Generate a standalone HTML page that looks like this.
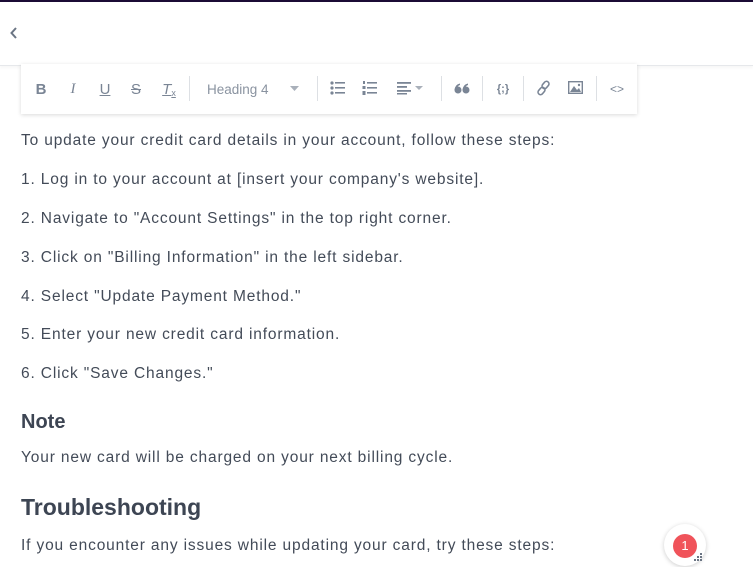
<!DOCTYPE html>
<html><head><meta charset="utf-8"><style>
*{margin:0;padding:0;box-sizing:border-box}
body{width:753px;height:567px;overflow:hidden;background:#fff;font-family:"Liberation Sans",sans-serif;color:#3d4553;position:relative}
.top{position:absolute;left:0;top:0;width:753px;height:2px;background:#1b0b35}
.hdr{position:absolute;left:0;top:2px;width:753px;height:64px;background:#fff;border-bottom:1px solid #e6e8eb;box-shadow:0 2px 3px rgba(0,0,0,.04)}
.back{position:absolute;left:9px;top:26px}
.tb{position:absolute;left:21px;top:64px;width:616px;height:50px;background:#fff;box-shadow:0 1px 4px rgba(0,0,0,.15);}
.tb .i{position:absolute;top:0;height:50px;display:flex;align-items:center;justify-content:center;color:#7a8595;font-size:15px}
.sep{position:absolute;top:12px;width:1px;height:25px;background:#dde0e4}
p,h4,h2{position:absolute;left:21px;white-space:nowrap}
p{font-size:15.5px;letter-spacing:.85px;color:#434b58}
</style></head><body>
<div class="top"></div>
<div class="hdr"></div>
<svg class="back" width="10" height="14" viewBox="0 0 10 14"><path d="M7 2 L2.5 7 L7 12" fill="none" stroke="#6b7584" stroke-width="2"/></svg>
<div class="tb">
 <div class="i" style="left:12px;width:16px;font-weight:bold">B</div>
 <div class="i" style="left:44px;width:16px;font-style:italic;font-family:'Liberation Serif',serif">I</div>
 <div class="i" style="left:76px;width:16px;text-decoration:underline">U</div>
 <div class="i" style="left:107px;width:16px;text-decoration:line-through">S</div>
 <div class="i" style="left:140px;width:16px;font-style:italic;text-decoration:underline">T<span style="font-size:9px;font-style:normal;text-decoration:none;margin-top:8px">x</span></div>
 <div class="sep" style="left:168px"></div>
 <div class="i" style="left:186px;font-size:13.5px;color:#8a93a0">Heading 4</div>
 <svg style="position:absolute;left:269px;top:22px" width="9" height="5"><path d="M0 0H9L4.5 5Z" fill="#a9b0ba"/></svg>
 <div class="sep" style="left:296px"></div>
 <svg style="position:absolute;left:309px;top:16px" width="16" height="16" viewBox="0 0 16 16" fill="#7a8595"><circle cx="2" cy="3" r="1.6"/><circle cx="2" cy="8" r="1.6"/><circle cx="2" cy="13" r="1.6"/><rect x="5" y="2" width="10" height="1.6"/><rect x="5" y="7" width="10" height="1.6"/><rect x="5" y="12" width="10" height="1.6"/></svg>
 <svg style="position:absolute;left:341px;top:16px" width="16" height="16" viewBox="0 0 16 16" fill="#7a8595"><rect x="1" y="1" width="2" height="3"/><rect x="0.5" y="6" width="3" height="3"/><rect x="0.5" y="11" width="3" height="4"/><rect x="5" y="2" width="10" height="1.6"/><rect x="5" y="7" width="10" height="1.6"/><rect x="5" y="12" width="10" height="1.6"/></svg>
 <svg style="position:absolute;left:376px;top:17px" width="16" height="14" viewBox="0 0 16 14" fill="#7a8595"><rect y="1" width="14" height="1.8"/><rect y="5" width="10" height="1.8"/><rect y="9" width="14" height="1.8"/><rect y="12" width="10" height="1.5"/></svg>
 <svg style="position:absolute;left:394px;top:22px" width="8" height="4"><path d="M0 0H8L4 4Z" fill="#a9b0ba"/></svg>
 <div class="sep" style="left:420px"></div>
 <svg style="position:absolute;left:433px;top:19px" width="16" height="11" viewBox="0 0 16 11" fill="#7a8595"><circle cx="4" cy="7" r="3.5"/><path d="M0.5 7 Q1 1.5 6 0.5 L6 2 Q3 3 3 6Z"/><circle cx="12" cy="7" r="3.5"/><path d="M8.5 7 Q9 1.5 14 0.5 L14 2 Q11 3 11 6Z"/></svg>
 <div class="sep" style="left:461px"></div>
 <div class="i" style="left:472px;width:20px;font-size:11px;font-weight:bold">{;}</div>
 <div class="sep" style="left:502px"></div>
 <svg style="position:absolute;left:516px;top:16px" width="14" height="16" viewBox="0 0 14 16" fill="none" stroke="#7a8595" stroke-width="1.6"><rect x="6" y="1" width="5" height="8" rx="2.5" transform="rotate(40 8.5 5)"/><rect x="2" y="7" width="5" height="8" rx="2.5" transform="rotate(40 4.5 11)"/></svg>
 <svg style="position:absolute;left:547px;top:17px" width="15" height="13" viewBox="0 0 15 13"><rect x="0.7" y="0.7" width="13.6" height="11.6" fill="none" stroke="#7a8595" stroke-width="1.4"/><path d="M2 11 L6 5 L9 9 L11 7 L13 11Z" fill="#7a8595"/><circle cx="11" cy="4" r="1.2" fill="#7a8595"/></svg>
 <div class="sep" style="left:575px"></div>
 <div class="i" style="left:588px;width:16px;font-size:12px">&lt;&gt;</div>
</div>
<p style="top:132px">To update your credit card details in your account, follow these steps:</p>
<p style="top:171px">1. Log in to your account at [insert your company's website].</p>
<p style="top:210px">2. Navigate to "Account Settings" in the top right corner.</p>
<p style="top:249px">3. Click on "Billing Information" in the left sidebar.</p>
<p style="top:288px">4. Select "Update Payment Method."</p>
<p style="top:326px">5. Enter your new credit card information.</p>
<p style="top:365px">6. Click "Save Changes."</p>
<h4 style="top:411px;font-size:20px;font-weight:bold;color:#3d4553">Note</h4>
<p style="top:449px">Your new card will be charged on your next billing cycle.</p>
<h2 style="top:494px;font-size:23px;font-weight:bold;color:#3d4553">Troubleshooting</h2>
<p style="top:537px">If you encounter any issues while updating your card, try these steps:</p>
<div style="position:absolute;left:664px;top:524px;width:42px;height:42px;border-radius:50%;background:#fff;box-shadow:0 1px 5px rgba(0,0,0,.2)"></div>
<div style="position:absolute;left:673px;top:534px;width:24px;height:24px;border-radius:50%;background:#f0535a;color:#fff;font-size:13px;text-align:center;line-height:24px">1</div>
<svg style="position:absolute;left:694px;top:553px" width="10" height="10" fill="#6b7584"><rect x="6" y="0" width="2" height="2"/><rect x="3" y="3" width="2" height="2"/><rect x="6" y="3" width="2" height="2"/><rect x="0" y="6" width="2" height="2"/><rect x="3" y="6" width="2" height="2"/><rect x="6" y="6" width="2" height="2"/></svg>
</body></html>
